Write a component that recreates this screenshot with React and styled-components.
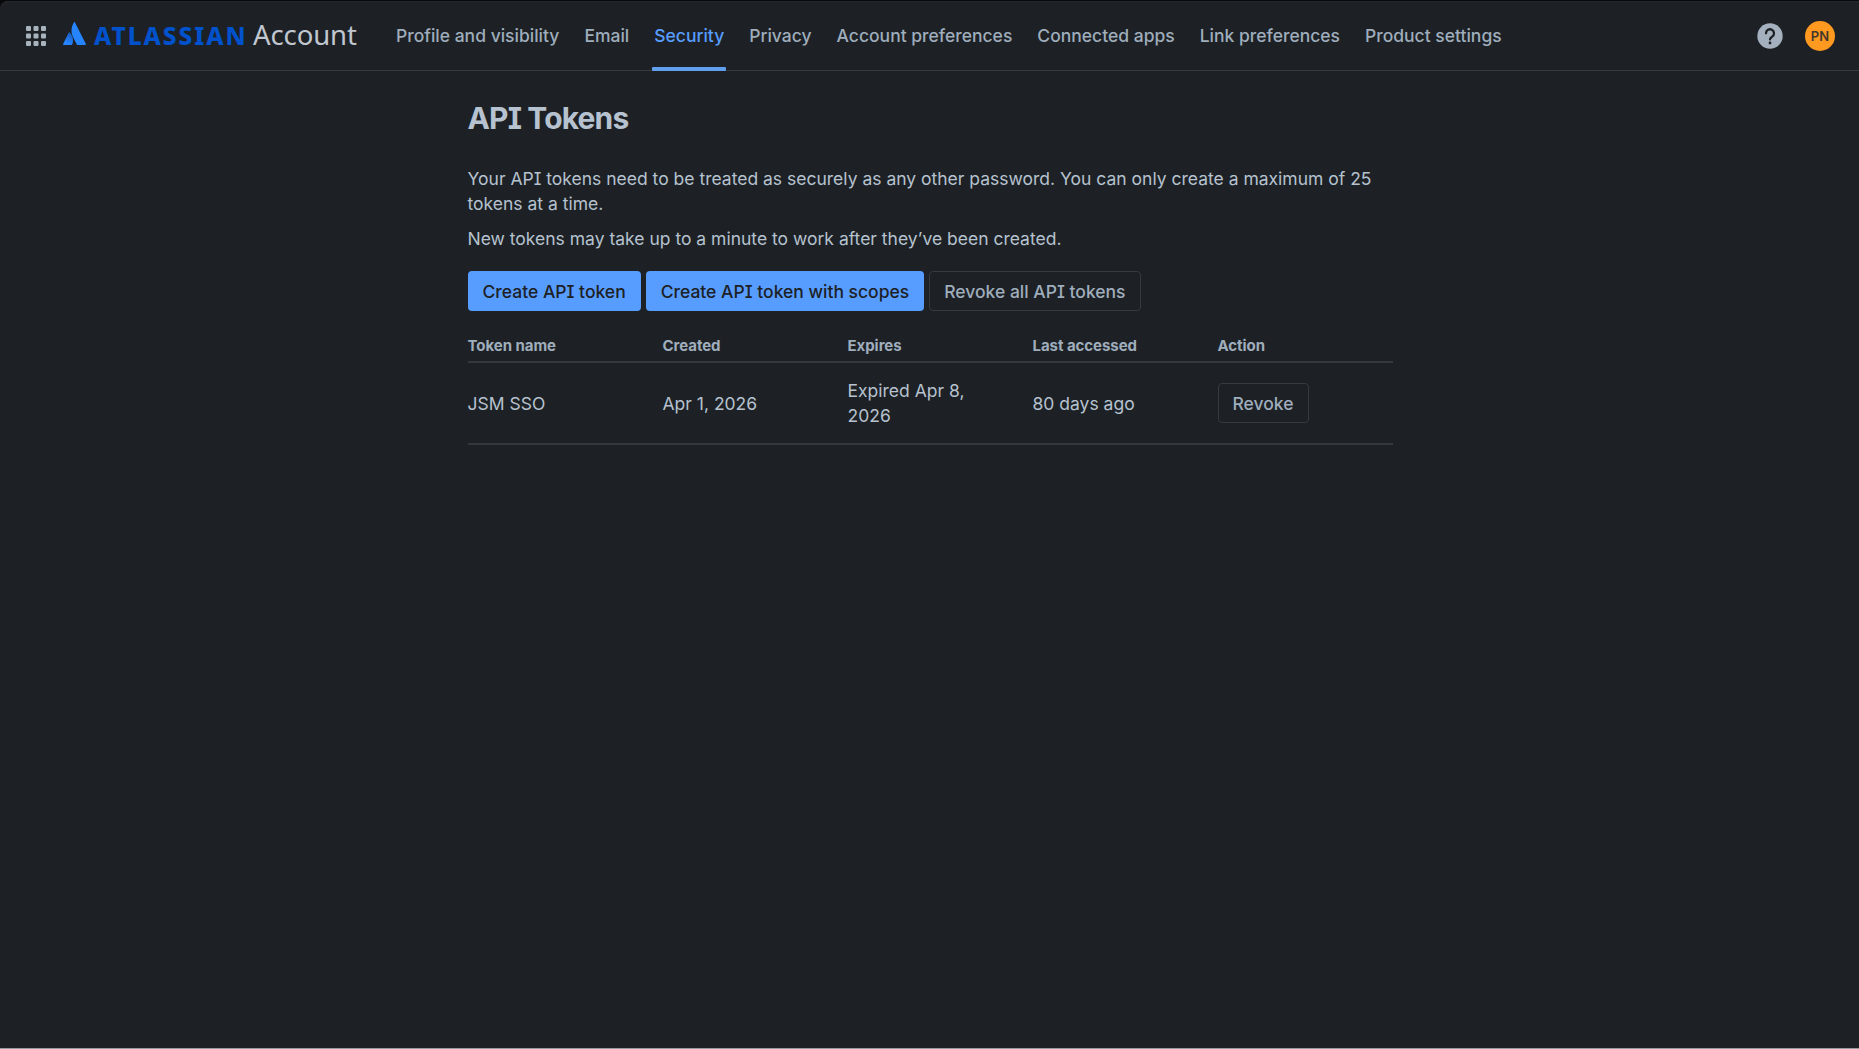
import React from 'react'
import styled, { createGlobalStyle } from 'styled-components'

const tabs = [
  'Profile and visibility',
  'Email',
  'Security',
  'Privacy',
  'Account preferences',
  'Connected apps',
  'Link preferences',
  'Product settings',
]

const tokens = [
  { name: 'JSM SSO', created: 'Apr 1, 2026', expires: 'Expired Apr 8, 2026', accessed: '80 days ago' },
]

const AppSwitcherIcon = () => (
  <svg width="20" height="20" viewBox="0 0 20 20" fill="#a9b3bd">
    {[0, 7.5, 15].map((y) =>
      [0, 7.5, 15].map((x) => <rect key={`${x}-${y}`} x={x} y={y} width="5" height="5" rx="1" />)
    )}
  </svg>
)

const LogoMark = () => (
  <Mark width="23" height="23" viewBox="0 0 23 23">
    <defs>
      <linearGradient id="mark" x1="10" y1="11" x2="3" y2="22" gradientUnits="userSpaceOnUse">
        <stop offset="0" stopColor="#1558bc" />
        <stop offset="0.9" stopColor="#2684ff" />
      </linearGradient>
    </defs>
    <path
      d="M6.8 10.6c-.3-.4-.8-.4-1.1.1L.1 21.9c-.2.5.1 1 .6 1h7.9c.3 0 .5-.1.6-.4 1.7-3.5.7-8.8-2.400-11.900z"
      fill="url(#mark)"
    />
    <path
      d="M10.9.4c-3.100 5-2.900 10.500-.9 14.600l3.800 7.500c.1.3.4.4.6.4h7.900c.5 0 .9-.5.6-1L12 .4c-.2-.5-.8-.5-1.100 0z"
      fill="#2684ff"
    />
  </Mark>
)

const HelpIcon = () => (
  <svg width="26" height="26" viewBox="0 0 26 26" fill="none">
    <circle cx="13" cy="13" r="12.7" fill="#a5b0be" />
    <path
      d="M9 10.3a4 4 0 1 1 6.2 3.3c-1.300.8-2.200 1.300-2.200 2.800"
      stroke="#1d2125"
      strokeWidth="2.3"
      strokeLinecap="round"
    />
    <circle cx="13" cy="20" r="1.4" fill="#1d2125" />
  </svg>
)

export default () => (
  <Page>
    <GlobalStyle />
    <Header>
      <Brand>
        <AppSwitcherIcon />
        <Logo>
          <LogoMark />
          <Wordmark>ATLASSIAN</Wordmark>
          <Product>Account</Product>
        </Logo>
      </Brand>
      <Nav>
        {tabs.map((tab) => (
          <Tab key={tab} $active={tab === 'Security'}>
            {tab}
          </Tab>
        ))}
      </Nav>
      <Actions>
        <HelpIcon />
        <Avatar>PN</Avatar>
      </Actions>
    </Header>
    <Main>
      <Title>API Tokens</Title>
      <Text>
        Your API tokens need to be treated as securely as any other password. You can only create a
        maximum of 25 tokens at a time.
      </Text>
      <Text>New tokens may take up to a minute to work after they’ve been created.</Text>
      <Buttons>
        <PrimaryButton>Create API token</PrimaryButton>
        <PrimaryButton>Create API token with scopes</PrimaryButton>
        <Button>Revoke all API tokens</Button>
      </Buttons>
      <Table>
        <thead>
          <tr>
            <Th>Token name</Th>
            <Th>Created</Th>
            <Th>Expires</Th>
            <Th>Last accessed</Th>
            <Th>Action</Th>
          </tr>
        </thead>
        <tbody>
          {tokens.map((token) => (
            <tr key={token.name}>
              <Td>{token.name}</Td>
              <Td>{token.created}</Td>
              <Td>{token.expires}</Td>
              <Td>{token.accessed}</Td>
              <Td>
                <Button>Revoke</Button>
              </Td>
            </tr>
          ))}
        </tbody>
      </Table>
    </Main>
  </Page>
)

const GlobalStyle = createGlobalStyle`
  * {
    box-sizing: border-box;
  }
  body {
    margin: 0;
    background-color: #08090b;
    font-family: Inter, 'Liberation Sans', sans-serif;
    font-size: 17.5px;
    line-height: 25px;
    color: #b6c2cf;
  }
`

const Page = styled.div`
  display: flex;
  flex-direction: column;
  height: 100vh;
  border-top: 1px solid #08090b;
  border-bottom: 1px solid #96999e;
  border-top-left-radius: 8px;
  background-color: #1d2125;
  background-clip: padding-box;
`

const Header = styled.header`
  display: flex;
  flex-shrink: 0;
  height: 70px;
  padding: 0 24px 0 26px;
  border-top: 1px solid #24292d;
  border-top-left-radius: 8px;
  border-bottom: 1px solid #363b3f;
`

const Brand = styled.div`
  display: flex;
  align-items: center;
  width: 368px;
  gap: 17px;
`

const Logo = styled.div`
  display: flex;
  align-items: baseline;
  margin-top: -3px;
`

const Mark = styled.svg`
  flex-shrink: 0;
  margin-bottom: -1px;
`

const Wordmark = styled.span`
  width: 159px;
  margin-left: 8px;
  font: 800 24.5px 'Noto Sans', sans-serif;
  letter-spacing: 1.9px;
  color: #0052cc;
`

const Product = styled.span`
  font: 400 27.5px 'Noto Sans', sans-serif;
  letter-spacing: -0.1px;
  color: #c1c7d0;
`

const Nav = styled.nav`
  display: flex;
  gap: 21px;
`

const Tab = styled.a`
  position: relative;
  display: flex;
  align-items: center;
  padding: 0 2px 2px;
  font-weight: 500;
  color: ${({ $active }) => ($active ? '#579dff' : '#9fadbc')};

  &::after {
    content: '';
    display: ${({ $active }) => ($active ? 'block' : 'none')};
    position: absolute;
    left: 0;
    right: 0;
    bottom: -1px;
    height: 4px;
    border-radius: 1px;
    background-color: #5f9fee;
  }
`

const Actions = styled.div`
  display: flex;
  align-items: center;
  gap: 22px;
  margin-left: auto;
`

const Avatar = styled.div`
  width: 30px;
  border-radius: 50%;
  background-color: #ff991f;
  font-size: 13px;
  font-weight: 600;
  line-height: 30px;
  text-align: center;
  color: #42382c;
`

/* cv08 gives the capital I its serifs */
const Main = styled.main`
  width: 925px;
  margin-left: 467.5px;
  padding-top: 30px;
  font-feature-settings: 'cv08';
`

const Title = styled.h1`
  margin: 0 0 30px;
  font-size: 30px;
  font-weight: 650;
  line-height: 35px;
  letter-spacing: -0.85px;
`

const Text = styled.p`
  margin: 0 0 10px;
`

const Buttons = styled.div`
  display: flex;
  gap: 5px;
  margin-top: 20px;
`

const Button = styled.button`
  height: 40px;
  padding: 0 14px;
  border: 1px solid #353a3f;
  border-radius: 4px;
  background: none;
  font: inherit;
  font-weight: 500;
  font-feature-settings: 'cv08';
  white-space: nowrap;
  color: #9fadbc;
`

const PrimaryButton = styled(Button)`
  padding: 0 15px;
  border: none;
  background-color: #579dff;
  color: #1d2125;
`

const Table = styled.table`
  width: 100%;
  margin-top: 20px;
  border-collapse: collapse;
  table-layout: fixed;
`

const Th = styled.th`
  padding: 2px 10px 3px;
  border-bottom: 2px solid #33383c;
  font-size: 15px;
  font-weight: 650;
  letter-spacing: -0.05px;
  text-align: left;
  color: #9fadbc;

  &:first-child {
    padding-left: 0;
  }
`

const Td = styled.td`
  height: 82px;
  padding: 0 10px;
  border-bottom: 2px solid #33383c;
  vertical-align: middle;

  &:first-child {
    padding-left: 0;
  }
`
